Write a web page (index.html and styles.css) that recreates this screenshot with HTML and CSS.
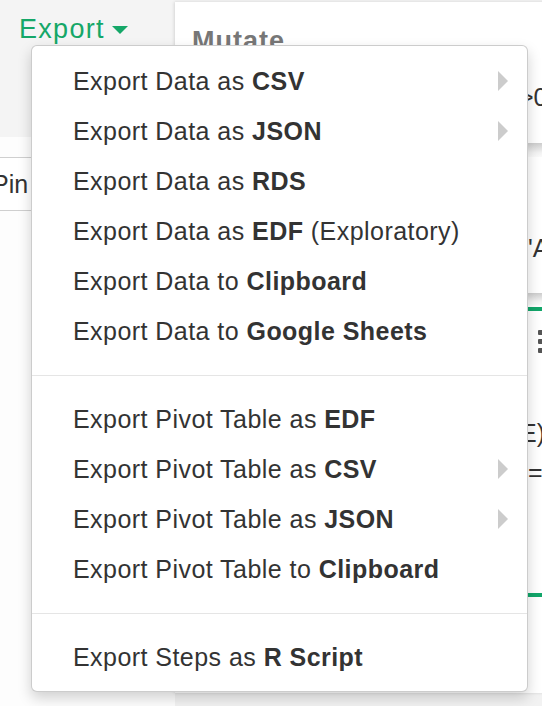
FILE: index.html
```html
<!DOCTYPE html>
<html lang="en">
<head>
<meta charset="utf-8">
<title>Export menu</title>
<link rel="stylesheet" href="styles.css">
</head>
<body>
<div class="app">
  <aside class="left">
    <div class="toolbar">
      <div class="export-btn">Export<span class="caret"></span></div>
    </div>
    <div class="left-body">
      <div class="pin">Pin</div>
    </div>
  </aside>
  <main class="panel">
    <h2 class="panel-title">Mutate</h2>
    <div class="row row-b"><span class="peek peek-b">&gt;0</span></div>
    <div class="band"></div>
    <div class="row row-c"><span class="peek">'A</span></div>
    <div class="band band-2"></div>
    <div class="green"></div>
    <div class="row row-d">
      <span class="dots"><i></i><i></i><i></i></span>
    </div>
    <div class="row row-e"><span class="peek peek-e">E)</span></div>
    <div class="row row-f"><span class="peek">=</span></div>
    <div class="green green-2"></div>
  </main>

  <ul class="menu">
    <li class="item">Export Data as <b>CSV</b><span class="sub-arrow"></span></li>
    <li class="item">Export Data as <b>JSON</b><span class="sub-arrow"></span></li>
    <li class="item">Export Data as <b>RDS</b></li>
    <li class="item">Export Data as <b>EDF</b> (Exploratory)</li>
    <li class="item">Export Data to <b>Clipboard</b></li>
    <li class="item">Export Data to <b>Google Sheets</b></li>
    <li class="divider"></li>
    <li class="item">Export Pivot Table as <b>EDF</b></li>
    <li class="item">Export Pivot Table as <b>CSV</b><span class="sub-arrow"></span></li>
    <li class="item">Export Pivot Table as <b>JSON</b><span class="sub-arrow"></span></li>
    <li class="item">Export Pivot Table to <b>Clipboard</b></li>
    <li class="divider"></li>
    <li class="item">Export Steps as <b>R Script</b></li>
  </ul>
</div>
</body>
</html>
```
FILE: styles.css
```css
html, body {
  margin: 0;
  padding: 0;
}
body {
  width: 542px;
  height: 706px;
  overflow: hidden;
  background: #f2f2f2;
  font-family: "Liberation Sans", Arial, Helvetica, sans-serif;
  color: #333;
}
.app {
  position: relative;
  display: flex;
  width: 542px;
  height: 706px;
  overflow: hidden;
}

/* left column */
.left {
  width: 175px;
  flex: none;
  display: flex;
  flex-direction: column;
}
.toolbar {
  height: 137px;
  background: #f4f4f4;
  padding: 14px 0 0 19px;
  box-sizing: border-box;
}
.export-btn {
  display: flex;
  align-items: center;
  color: #15a768;
  font-size: 27px;
  line-height: 30px;
  letter-spacing: 1.3px;
}
.caret {
  display: inline-block;
  width: 0;
  height: 0;
  margin-left: 7px;
  margin-top: 2px;
  border-left: 8px solid transparent;
  border-right: 8px solid transparent;
  border-top: 8px solid #15a768;
}
.left-body {
  flex: 1;
  background: #fdfdfd;
  padding-top: 20px;
}
.pin {
  height: 52px;
  border-top: 1px solid #cfcfcf;
  border-bottom: 1px solid #cfcfcf;
  background: #fff;
  font-size: 25px;
  line-height: 52px;
  text-indent: -8px;
  overflow: hidden;
  color: #333;
}

/* right panel */
.panel {
  flex: none;
  width: 500px;
  height: 691px;
  margin-top: 2px;
  background: #fff;
  box-shadow: -1px 0 3px rgba(0, 0, 0, 0.12);
  display: flex;
  flex-direction: column;
}
.panel-title {
  margin: 0;
  height: 68px;
  box-sizing: border-box;
  padding: 24px 0 0 17px;
  font-size: 27px;
  line-height: 30px;
  font-weight: 700;
  color: #777;
  letter-spacing: 1px;
}
.row {
  box-sizing: border-box;
  font-size: 25px;
  line-height: 30px;
  color: #333;
}
.peek {
  display: block;
  padding-left: 353px;
}
.peek-b { padding-left: 344px; }
.peek-e { padding-left: 345px; }
.row-b { height: 73px; padding-top: 12px; }
.row-c { height: 136px; padding-top: 76px; }
.band {
  height: 14px;
  background: linear-gradient(#cdcdcd, #f3f3f3 70%, #fafafa);
}
.band-2 { height: 12px; }
.green {
  height: 4px;
  margin-top: 2px;
  background: #12a66a;
}
.green-2 { margin-top: 0; }
.row-d {
  height: 107px;
  padding: 19px 0 0 363px;
}
.dots {
  display: flex;
  flex-direction: column;
  gap: 4px;
}
.dots i {
  display: block;
  width: 5px;
  height: 5px;
  border-radius: 1px;
  background: #555;
}
.row-e { height: 39px; padding-top: 0; }
.row-f { height: 136px; padding-top: 0; }

/* dropdown menu (overlay) */
.menu {
  position: absolute;
  left: 31px;
  top: 45px;
  width: 497px;
  box-sizing: border-box;
  margin: 0;
  padding: 10px 0 9px;
  list-style: none;
  background: #fff;
  border: 1px solid rgba(0, 0, 0, 0.2);
  border-radius: 6px;
  box-shadow: 0 6px 14px rgba(0, 0, 0, 0.18);
}
.item {
  display: flex;
  align-items: center;
  height: 50px;
  padding: 0 19px 0 41px;
  font-size: 25px;
  letter-spacing: 0.45px;
  color: #333;
  white-space: pre;
}
.item b {
  font-weight: 700;
}
.sub-arrow {
  margin-left: auto;
  width: 0;
  height: 0;
  border-left: 10px solid #cccccc;
  border-top: 10px solid transparent;
  border-bottom: 10px solid transparent;
}
.divider {
  height: 1px;
  margin: 19px 0 18px;
  background: #e5e5e5;
}
```
